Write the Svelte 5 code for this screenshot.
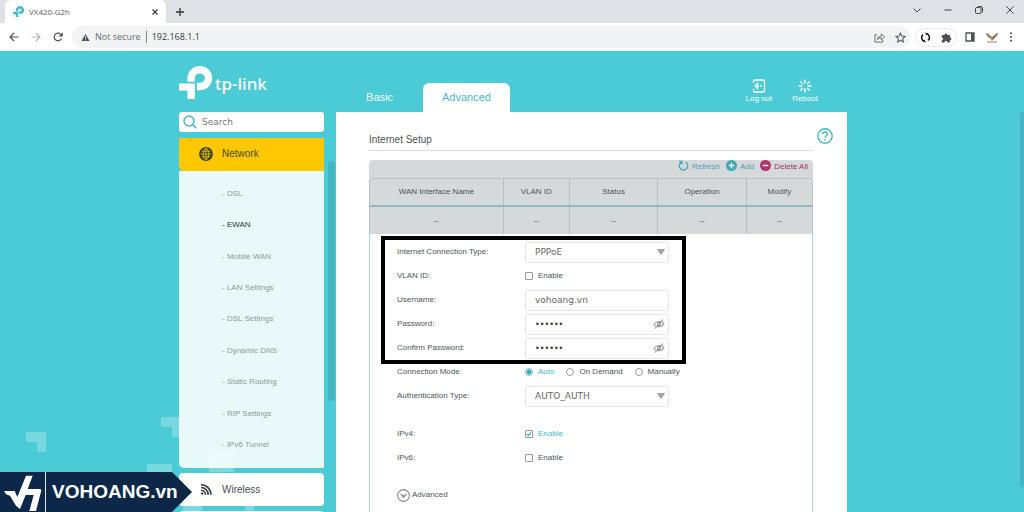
<script>
  const subItems = [
    'DSL', 'EWAN', 'Mobile WAN', 'LAN Settings', 'DSL Settings',
    'Dynamic DNS', 'Static Routing', 'RIP Settings', 'IPv6 Tunnel'
  ];
  const columns = ['WAN Interface Name', 'VLAN ID', 'Status', 'Operation', 'Modify'];
  const modes = ['Auto', 'On Demand', 'Manually'];

  let active = $state('EWAN');
  let mode = $state('Auto');
  let vlan = $state(false);
  let ipv4 = $state(true);
  let ipv6 = $state(false);
  let username = $state('vohoang.vn');
  let password = $state('abcdef');
  let confirmation = $state('abcdef');
</script>

{#snippet mark()}
  <path d="M63 80V69A26 25 0 1 1 89 94H80" fill="none" stroke="currentColor" stroke-width="22" />
  <path d="M27 85H74V131H52V106H27z" fill="currentColor" />
{/snippet}

{#snippet eye()}
  <svg class="eye" viewBox="0 0 12 10" width="12" height="10" fill="none" stroke="#999" stroke-width="1.1">
    <path d="M1 5.5C3 2 9 1.500 11 4.500C9 8.500 3 8.500 1 5.500z" />
    <circle cx="6" cy="5" r="1.600" />
    <path d="M2 9.500L10 .5" />
  </svg>
{/snippet}

{#snippet caret()}
  <svg class="caret" viewBox="0 0 8 6" width="8" height="6"><path d="M.5.5h7L4 5.500z" fill="#a3a3a3" stroke="#8a8a8a" stroke-width=".6" /></svg>
{/snippet}

<div class="browser">
  <div class="tabstrip">
    <div class="tab">
      <svg viewBox="27 33 98 98" width="11" height="11" class="teal">{@render mark()}</svg>
      <span>VX420-G2h</span>
      <button aria-label="Close tab">
        <svg viewBox="0 0 8 8" width="8" height="8" fill="none" stroke="#333" stroke-width="1.1"><path d="M1.500 1.500l5 5M6.500 1.500l-5 5" /></svg>
      </button>
    </div>
    <button class="newtab" aria-label="New tab">
      <svg viewBox="0 0 10 10" width="10" height="10" fill="none" stroke="#333" stroke-width="1.300"><path d="M5 1v8M1 5h8" /></svg>
    </button>
    <div class="window">
      <button aria-label="Search tabs"><svg viewBox="0 0 10 10" width="10" height="10"><path d="M1.500 3.500L5 7l3.500-3.500" /></svg></button>
      <button aria-label="Minimize"><svg viewBox="0 0 10 10" width="10" height="10"><path d="M1.500 5h7" /></svg></button>
      <button aria-label="Restore"><svg viewBox="0 0 10 10" width="10" height="10"><rect x="1.500" y="2.500" width="5.500" height="6" rx="1.200" /><path d="M3.500 2.300Q3.500 1.500 4.500 1.500H7Q8.500 1.500 8.500 3V6.500Q8.500 7.500 7.500 7.500" /></svg></button>
      <button aria-label="Close"><svg viewBox="0 0 10 10" width="10" height="10"><path d="M1.500 1.500l7 7M8.500 1.500l-7 7" /></svg></button>
    </div>
  </div>

  <div class="toolbar">
    <div class="nav">
      <button aria-label="Back"><svg viewBox="0 0 10 10" width="10" height="10" stroke="#4d5156"><path d="M9.500 5H1M5 1L1 5l4 4" /></svg></button>
      <button aria-label="Forward"><svg viewBox="0 0 10 10" width="10" height="10" stroke="#b4b7ba"><path d="M.5 5H9M5 1l4 4-4 4" /></svg></button>
      <button aria-label="Reload"><svg viewBox="0 0 10 10" width="10" height="10" stroke="#4d5156"><path d="M8.500 6.500A3.800 3.800 0 1 1 7.800 2.300L9 3.500M9.200.8V3.800H6.200" /></svg></button>
    </div>
    <div class="omnibox">
      <svg viewBox="0 0 10 9" width="9" height="9"><path d="M5 .5L9.500 8.500H.5z" fill="#4d5156" /><path d="M5 3v3M5 6.700v1" stroke="#f1f3f4" stroke-width=".9" /></svg>
      <button class="secure">Not secure</button>
      <input aria-label="Address" value="192.168.1.1" />
      <button aria-label="Share"><svg viewBox="0 0 12 12" width="11" height="11" fill="none" stroke="#666" stroke-width="1"><path d="M3.500 3H1v8h8.500V8.500M3.500 8Q4 4.500 8 4.500V2l3.500 3.500L8 8.500V6.500Q5.500 6.300 3.500 8z" /></svg></button>
      <button aria-label="Bookmark"><svg viewBox="0 0 12 12" width="11" height="11" fill="none" stroke="#4d5156" stroke-width="1.100"><path d="M6 1.200l1.500 3.300 3.500.4-2.600 2.400.7 3.500L6 9l-3.100 1.800.7-3.500L1 4.900l3.500-.4z" /></svg></button>
    </div>
    <div class="extensions">
      <button aria-label="Sync extension"><svg viewBox="0 0 12 12" width="11" height="11" fill="none" stroke="#111" stroke-width="1.700"><path d="M7.200 1.800A4.300 4.300 0 0 1 8.800 9.200M4.800 10.200A4.300 4.300 0 0 1 3.200 2.800" /><path d="M5.600 1.200L8 1.600 6.600 3.600M6.400 10.800L4 10.400 5.400 8.400" stroke-width="1" /></svg></button>
      <button aria-label="Extensions"><svg viewBox="0 0 12 12" width="11" height="11"><path d="M.8 3.200H3.800a1.500 1.500 0 1 1 3 0h3V6a1.500 1.500 0 1 1 0 3v2.500H7a1.600 1.600 0 0 0-3.200 0H.8V9a1.500 1.500 0 0 0 0-3z" fill="#4d5156" /></svg></button>
    </div>
    <div class="tail">
      <button aria-label="Side panel"><svg viewBox="0 0 10 10" width="10" height="10"><path d="M1 1h8v8H1z" fill="none" stroke="#4d5156" stroke-width="1.300" /><path d="M6 1h3v8H6z" fill="#4d5156" /></svg></button>
      <button aria-label="Profile"><svg viewBox="0 0 12 11" width="12" height="11"><path d="M0 .8Q.5 5 4.500 6.500L6 9.200 7.500 6.500Q11.500 5 12 .8 8.500 2 7.300 4.200L6 5.200 4.700 4.200Q3.500 2 0 .8z" fill="#8a8175" /><path d="M4.600 4l1.200 4.500L7 4.500z" fill="#d59a2c" /><path d="M7 5l.6 3 1.400-3.500z" fill="#9e3a2c" /><path d="M1 10h10" stroke="#888" /></svg></button>
      <button aria-label="Menu"><svg viewBox="0 0 4 10" width="4" height="10" fill="#4d5156"><circle cx="2" cy="1.300" r="1" /><circle cx="2" cy="5" r="1" /><circle cx="2" cy="8.700" r="1" /></svg></button>
    </div>
  </div>

  <div class="page">
    <svg class="decor" viewBox="0 0 260 100" width="260" height="100" fill="#fff" fill-opacity=".25">
      <path d="M26 20H46V40H37V30H26zM161 5H182V25H172V15H161zM147 52H172V72H147zM209 40H234V60H209zM183 94H202V100H183zM245 94H254V100H245z" />
    </svg>
    <div class="layout">
      <aside>
        <div class="logo">
          <svg viewBox="27 33 98 98" width="33" height="33">{@render mark()}</svg>
          <span>tp-link</span>
        </div>
        <label class="search">
          <svg viewBox="0 0 14 14" width="14" height="14" fill="none" stroke="#4ab5c0" stroke-width="1.400"><circle cx="6" cy="6" r="5" /><path d="M9.600 9.600L13.300 13.300" /></svg>
          <input type="search" aria-label="Search" placeholder="Search" />
        </label>
        <nav>
          <button class="section open">
            <svg viewBox="0 0 14 14" width="14" height="14"><circle cx="7" cy="7" r="6.900" fill="#35401c" /><g fill="none" stroke="#fdc800" stroke-width=".8"><path d="M7 1.500v11M1.500 7h11M2.800 4.200h8.400M2.800 9.800h8.400" /><ellipse cx="7" cy="7" rx="2.800" ry="5.500" /></g></svg>
            Network
          </button>
          <ul>
            {#each subItems as item}
              <li><a href="#{item}" class:active={active === item} onclick={() => (active = item)}>- {item}</a></li>
            {/each}
          </ul>
          <button class="section">
            <svg viewBox="0 0 14 14" width="14" height="14" fill="none" stroke="#3b3f42" stroke-width="1.600"><circle cx="3.200" cy="10.500" r="1" fill="#3b3f42" stroke-width=".6" /><path d="M2 7.200A4.500 4.500 0 0 1 6.500 11.700M2 4.500A7.200 7.200 0 0 1 9.200 11.700M2 1.700A10 10 0 0 1 12 11.700" /></svg>
            Wireless
          </button>
          <div class="section"></div>
        </nav>
      </aside>
      <div class="rail"><i></i></div>

      <div class="content">
        <header>
          <a class="top" href="#basic">Basic</a>
          <a class="top current" href="#advanced">Advanced</a>
          <div class="session">
            <button>
              <svg viewBox="0 0 14 14" width="14" height="14" fill="none" stroke="#fff" stroke-width="1.300"><path d="M1.500 4V2.500Q1.500 1 3 1H11Q12.500 1 12.500 2.500V11.500Q12.500 13 11 13H3Q1.500 13 1.500 11.500V10" /><path d="M5.500 4.500L3 7l2.500 2.500zM5 7h2M8 7h1.500" /></svg>
              Log out
            </button>
            <button>
              <svg viewBox="0 0 14 14" width="14" height="14" fill="none" stroke="#fff" stroke-width="1.400"><path d="M7 .5v4M7 9.500v4M.5 7h4M9.500 7h4M2.400 2.400L5 5M9 9l2.600 2.600M2.400 11.600L5 9M9 5l2.600-2.600" /></svg>
              Reboot
            </button>
          </div>
        </header>

        <main>
          <div class="title">
            <h1>Internet Setup</h1>
            <button aria-label="Help">
              <svg viewBox="0 0 16 16" width="16" height="16" fill="none" stroke="#4ab8c4" stroke-width="1.400"><circle cx="8" cy="8" r="7.200" /><path d="M5.500 6.300Q5.600 4 8 4T10.500 6.100Q10.500 7.200 9.200 8T8 9.800M8 11v1.400" /></svg>
            </button>
          </div>

          <div class="card">
            <div class="actions">
              <button><svg viewBox="0 0 12 12" width="11" height="11" fill="none" stroke="#4aa9b8" stroke-width="1.500"><path d="M4 2.200A4.600 4.600 0 1 0 8 2.200M1 1.500H4.200V4.600" /></svg>Refresh</button>
              <button><svg viewBox="0 0 12 12" width="11" height="11"><circle cx="6" cy="6" r="6" fill="#3fa9b8" /><path d="M6 3v6M3 6h6" stroke="#fff" stroke-width="1.500" /></svg>Add</button>
              <button class="danger"><svg viewBox="0 0 12 12" width="11" height="11"><circle cx="6" cy="6" r="6" fill="#b5326b" /><path d="M3 6h6" stroke="#fff" stroke-width="1.600" /></svg>Delete All</button>
            </div>
            <table>
              <thead><tr>{#each columns as c}<th>{c}</th>{/each}</tr></thead>
              <tbody><tr>{#each columns as c}<td>--</td>{/each}</tr></tbody>
            </table>

            <form>
              <div class="highlight"></div>
              <div class="row">
                <label for="type">Internet Connection Type:</label>
                <span class="field"><select id="type"><option>PPPoE</option></select>{@render caret()}</span>
              </div>
              <div class="row">
                <span>VLAN ID:</span>
                <label class="choice"><input type="checkbox" bind:checked={vlan} /><span>Enable</span></label>
              </div>
              <div class="row">
                <label for="user">Username:</label>
                <span class="field"><input id="user" type="text" bind:value={username} /></span>
              </div>
              <div class="row">
                <label for="pass">Password:</label>
                <span class="field"><input id="pass" type="password" bind:value={password} />{@render eye()}</span>
              </div>
              <div class="row">
                <label for="confirm">Confirm Password:</label>
                <span class="field"><input id="confirm" type="password" bind:value={confirmation} />{@render eye()}</span>
              </div>
              <div class="row">
                <span>Connection Mode:</span>
                <div class="modes">
                  {#each modes as m}
                    <label class="choice"><input type="radio" name="mode" value={m} bind:group={mode} /><span>{m}</span></label>
                  {/each}
                </div>
              </div>
              <div class="row">
                <label for="auth">Authentication Type:</label>
                <span class="field"><select id="auth"><option>AUTO_AUTH</option></select>{@render caret()}</span>
              </div>
              <div class="row spaced">
                <span>IPv4:</span>
                <label class="choice"><input type="checkbox" bind:checked={ipv4} /><span>Enable</span></label>
              </div>
              <div class="row">
                <span>IPv6:</span>
                <label class="choice"><input type="checkbox" bind:checked={ipv6} /><span>Enable</span></label>
              </div>
              <button type="button" class="more">
                <svg viewBox="0 0 14 14" width="13" height="13"><circle cx="7" cy="7" r="6.300" fill="none" stroke="#888" stroke-width="1.200" /><path d="M3.800 5.500L7 7l3.200-1.500L7 9.800z" fill="#888" stroke="#888" stroke-width=".6" /></svg>
                Advanced
              </button>
            </form>
          </div>
        </main>
      </div>
    </div>
    <div class="scrollbar"></div>

    <div class="banner">
      <svg viewBox="9 20 120 117" width="40" height="39" fill="#fff">
        <path d="M12 74H44L52 92L78 28H98L83 68H118Q126 68 123 76L108 134H88L101 86H77L60 128L48 118L30 88L18 84z" />
      </svg>
      <strong>VOHOANG.vn</strong>
    </div>
  </div>
</div>

<style>
  :global(body) { overflow: hidden; }
  .browser {
    display: flex;
    flex-direction: column;
    height: 100vh;
    font: 8px/12px "Liberation Sans", Arial, sans-serif;
    color: #4c5459;
  }
  .browser :is(*) { box-sizing: border-box; }
  svg { display: block; flex: none; }
  button, input, select { font: inherit; color: inherit; margin: 0; padding: 0; border: 0; background: none; }
  a { color: inherit; text-decoration: none; }

  .tabstrip { display: flex; align-items: center; height: 23px; padding: 0 9px 0 5px; background: #dee1e6; }
  .tab {
    display: flex; align-items: center; gap: 5px; align-self: stretch;
    width: 161px; padding: 0 7px 0 8px; background: #fff; border-radius: 6px 6px 0 0;
    font-family: "Open Sans", sans-serif; color: #5a5e62;
  }
  .tab span { flex: 1; }
  .teal { color: #45b9c6; }
  .newtab { margin-left: 9px; }
  .window { display: flex; gap: 21px; margin-left: auto; padding-bottom: 3px; }
  .window svg { fill: none; stroke: #444; stroke-width: 1; }

  .toolbar { display: flex; align-items: center; height: 28px; padding: 0 11px 0 9px; background: #fff; }
  .nav { display: flex; gap: 12px; width: 63px; }
  .nav svg { fill: none; stroke-width: 1.2; }
  .omnibox {
    display: flex; align-items: center; gap: 5px; flex: 1; height: 22px; padding: 0 4px 0 9px;
    border-radius: 11px; background: #f1f3f4;
    font-family: "Open Sans", sans-serif; font-size: 9px; color: #3a3d40;
  }
  .omnibox input { flex: 1; min-width: 0; }
  .secure { padding-right: 5px; border-right: 1px solid #85898c; color: #6b6f73; }
  .omnibox button + button { margin-left: 5px; }
  .extensions { display: flex; gap: 10px; margin-left: 5px; padding: 3px 4px; border: 1px solid #e8eaed; border-radius: 10px; }
  .tail { display: flex; align-items: center; gap: 11px; margin-left: 8px; }

  .page { position: relative; flex: 1; min-height: 0; overflow: hidden; padding-left: 2px; background: #4acbd6; }
  .decor { position: absolute; left: 0; bottom: 0; }
  .layout { position: relative; display: flex; width: 100%; max-width: 668px; min-height: 100%; margin: 0 auto; }
  .scrollbar { position: absolute; right: 0; top: 61px; bottom: 25px; width: 4px; background: #44b8c2; border-radius: 2px 0 0 2px; }

  aside { width: 145px; flex: none; }
  .logo { display: flex; gap: 3px; height: 61px; padding-top: 15px; color: #fff; font: 500 17px/36px "Noto Sans", sans-serif; }
  .search { display: flex; align-items: center; gap: 5px; height: 20px; padding: 0 4px; border-radius: 3px; background: #fff; }
  .search input { flex: 1; min-width: 0; font: 9px/14px "DejaVu Sans", Verdana, sans-serif; appearance: none; outline: 0; }
  .search input::placeholder { color: #777; opacity: 1; }
  nav { margin-top: 6px; }
  .section {
    display: flex; align-items: center; gap: 9px; width: 100%; height: 33px; margin-bottom: 5px; padding-left: 20px;
    border-radius: 4px; background: #fff; color: #4b5054; font-size: 10px;
  }
  .open { margin: 0; padding-bottom: 2px; border-radius: 0 0 0 5px; background: #fdc800; color: #4a4a20; }
  ul {
    display: grid; grid-auto-rows: 1fr; height: 297px; margin: 0 0 5px; padding: 7px 0; list-style: none;
    background: rgba(255, 255, 255, .88); border-radius: 0 0 0 5px;
  }
  li { display: flex; align-items: center; padding-left: 43px; color: #8a9a9c; }
  .active { color: #30383b; }
  .rail { width: 12px; flex: none; padding: 110px 1px 0 4px; }
  .rail i { display: block; height: 240px; border-radius: 3px; background: #44b5c1; }

  .content { display: flex; flex-direction: column; flex: 1; min-width: 0; }
  header { display: flex; align-items: flex-end; height: 61px; color: #fff; }
  .top { width: 87px; height: 29px; border-radius: 6px 6px 0 0; font-size: 11px; line-height: 29px; text-align: center; }
  .current { background: #fff; color: #4ab9c5; }
  .session { display: flex; gap: 20px; margin-left: auto; padding: 0 29px 7px 0; }
  .session button { display: flex; flex-direction: column; align-items: center; }

  main { flex: 1; padding: 16px 0 0 33px; background: #fff; }
  .title { display: flex; align-items: flex-start; margin-bottom: 9px; }
  h1 { flex: 1; height: 23px; margin: 0; border-bottom: 1px solid #d8dcdc; font-size: 10px; line-height: 24px; font-weight: 400; }
  .title button { margin: 0 14px 0 4px; }
  .card { margin-right: 34px; }
  .actions {
    display: flex; justify-content: flex-end; gap: 6px; height: 18px; padding: 0 5px 5px 0;
    border-radius: 4px 4px 0 0; background: #d6d9da; color: #4aa3b2;
  }
  .actions button { display: flex; align-items: flex-start; gap: 3px; line-height: 14px; }
  .actions .danger { color: #a8336a; }
  table { width: 100%; border-collapse: separate; border-spacing: 0; table-layout: fixed; background: #d6d9da; border: 1px solid #b9c2c4; border-bottom: 0; border-radius: 3px 3px 0 0; }
  th, td { height: 28px; padding: 0; font-weight: 400; text-align: center; border-left: 1px solid #b5bec0; }
  th { border-bottom: 2px solid #8fb9bf; }
  td { height: 27px; }
  th:first-child { width: 30%; }
  th:nth-child(2), th:nth-child(5) { width: 15%; }
  th:first-child, td:first-child { border-left: 0; }

  form { position: relative; padding: 6px 0 24px 27px; border: 1px solid #a9d9dd; border-width: 0 1px; }
  .highlight { position: absolute; left: 11px; top: 2px; width: 305px; height: 128px; border: 4px solid #000; pointer-events: none; }
  .row { display: grid; grid-template-columns: 128px 1fr; align-items: center; height: 24px; }
  .spaced { margin-top: 14px; }
  .field { display: flex; align-items: center; width: 144px; height: 21px; padding: 0 6px 0 9px; border: 1px solid #e6e6e6; border-radius: 3px; background: #fff; }
  .field input, .field select { flex: 1; min-width: 0; height: 100%; appearance: none; outline: 0; font: 9px/19px "DejaVu Sans", Verdana, sans-serif; color: #666; }
  .field input[type="password"] { font-size: 8px; color: #333; }
  .caret, .eye { margin-right: -3px; }
  .modes { display: flex; gap: 12px; }
  .choice { display: flex; align-items: center; gap: 5px; }
  .choice input { appearance: none; width: 8px; height: 8px; border: 1px solid #999; border-radius: 1px; background: #fff; }
  .choice input[type="radio"] { border-radius: 50%; }
  .choice input[type="radio"]:checked { border-color: #7fc4cc; background: radial-gradient(circle, #35aebb 2px, #fff 3px); }
  .choice input[type="checkbox"]:checked {
    background: url("data:image/svg+xml,%3Csvg xmlns='http://www.w3.org/2000/svg' viewBox='0 0 6 6'%3E%3Cpath d='M1 3l1.500 1.500L5 1.500' fill='none' stroke='%2335aebb' stroke-width='1.200'/%3E%3C/svg%3E") center / 6px no-repeat #fff;
  }
  .choice input:checked + span { color: #4ab9c5; }
  .more { display: flex; align-items: center; gap: 2px; margin-top: 18px; height: 14px; }

  .banner {
    position: absolute; left: 0; bottom: 0; display: flex; align-items: center; width: 192px; height: 40px; padding-left: 3px;
    background: #0d2748; color: #fff; clip-path: polygon(0 0, 172px 0, 100% 50%, 172px 100%, 0 100%);
  }
  .banner strong { margin-left: 2px; padding-left: 6px; border-left: 1px solid #dfe6ee; font: 700 19px/40px "Liberation Sans Narrow", "Arial Narrow", "Liberation Sans", sans-serif; }
</style>
